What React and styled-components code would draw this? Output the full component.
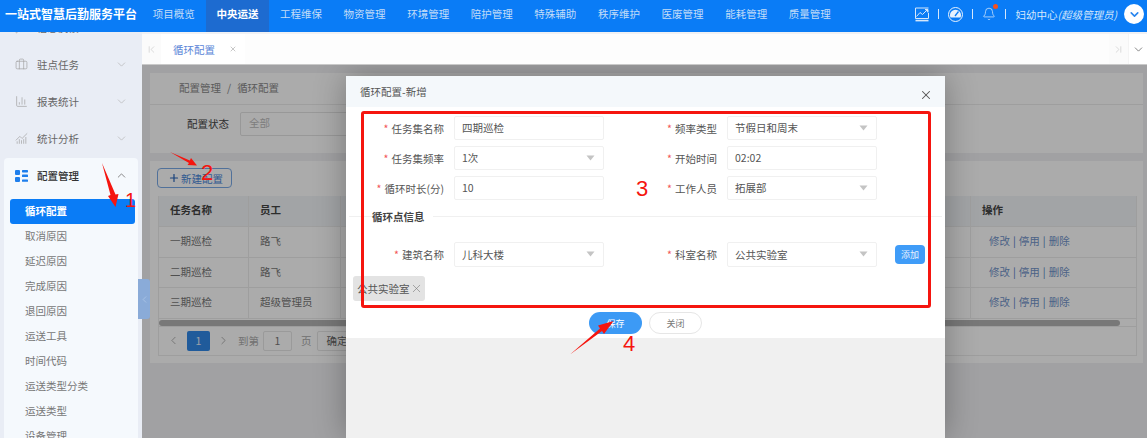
import React from 'react'
import styled, { createGlobalStyle } from 'styled-components'
import { Bell, Briefcase, ChartColumn, ChartNoAxesCombined, ChevronDown, ChevronFirst, ChevronLast, ChevronLeft, ChevronRight, ChevronUp, MessageSquare, Plus, X } from 'lucide-react'

const GlobalStyle = createGlobalStyle`
  * { box-sizing: border-box; }
  html, body { margin: 0; padding: 0; overflow: hidden; }
  body { font-family: "Noto Sans CJK SC", "Liberation Sans", sans-serif; font-size: 10.5px; color: #666; }
`

const NAV = ['项目概览', '中央运送', '工程维保', '物资管理', '环境管理', '陪护管理', '特殊辅助', '秩序维护', '医废管理', '能耗管理', '质量管理']
const SUBMENU = ['取消原因', '延迟原因', '完成原因', '退回原因', '运送工具', '时间代码', '运送类型分类', '运送类型', '设备管理']
const ROWS = [['一期巡检', '路飞'], ['二期巡检', '路飞'], ['三期巡检', '超级管理员']]

function GridIcon() {
  return (
    <svg width="13" height="12" viewBox="0 0 13 12" fill="#1f7fec">
      <rect x="0" y="0" width="5" height="5" rx="1" />
      <rect x="0" y="7" width="5" height="5" rx="1" />
      <rect x="7" y="0" width="6" height="2.4" rx="0.6" />
      <rect x="7" y="4.6" width="6" height="2.4" rx="0.6" />
      <rect x="7" y="9.4" width="6" height="2.4" rx="0.6" />
    </svg>
  )
}

function Caret() {
  return (
    <svg width="9" height="6" viewBox="0 0 9 6" fill="#c4c4c4">
      <path d="M0.5 0.5h8L4.5 5.5z" />
    </svg>
  )
}

function TrendBoard() {
  return (
    <svg width="14" height="15" viewBox="0 0 14 15" fill="none" stroke="#d5e7fb" strokeWidth="1">
      <path d="M13.5 1H.5v10.5h13V6" />
      <path d="M1.5 9.5 5 5.5l2.5 2L12 3" />
      <path d="M10 2.5h3V5.5" fill="#d5e7fb" />
      <rect x="0.5" y="12.8" width="13" height="1.6" fill="#d5e7fb" stroke="none" />
    </svg>
  )
}

function DialIcon() {
  return (
    <svg width="15" height="15" viewBox="0 0 15 15" fill="none" stroke="#e8f2fd">
      <circle cx="7.5" cy="7.5" r="7" strokeWidth="1" />
      <path d="M2.5 10.5a5.5 5.5 0 1 1 10 0z" fill="#e8f2fd" stroke="none" />
      <path d="M7 9 10.5 4.5" stroke="#0a7cf6" strokeWidth="1.3" />
    </svg>
  )
}

export default function App() {
  return (
    <Page>
      <GlobalStyle />
      <TopBar>
        <Logo>一站式智慧后勤服务平台</Logo>
        <Nav>
          {NAV.map((n) => (
            <NavItem key={n} $active={n === '中央运送'}>{n}</NavItem>
          ))}
        </Nav>
        <TopRight>
          <TrendBoard />
          <Sep />
          <DialIcon />
          <Sep />
          <BellWrap>
            <Bell size={14} strokeWidth={1.3} />
            <Dot />
          </BellWrap>
          <Sep />
          <UserName>妇幼中心<em>(超级管理员)</em></UserName>
          <Avatar><ChevronDown size={13} strokeWidth={3} color="#2a86ee" /></Avatar>
        </TopRight>
      </TopBar>

      <Body>
        <Sidebar>
          <MenuItem><MessageSquare size={13} strokeWidth={1.3} /><span>信息反馈</span><ChevronDown size={13} strokeWidth={1.2} /></MenuItem>
          <MenuItem><Briefcase size={13} strokeWidth={1.3} /><span>驻点任务</span><ChevronDown size={13} strokeWidth={1.2} /></MenuItem>
          <MenuItem><ChartColumn size={13} strokeWidth={1.3} /><span>报表统计</span><ChevronDown size={13} strokeWidth={1.2} /></MenuItem>
          <MenuItem><ChartNoAxesCombined size={13} strokeWidth={1.3} /><span>统计分析</span><ChevronDown size={13} strokeWidth={1.2} /></MenuItem>
          <MenuCard>
            <MenuHead><GridIcon /><span>配置管理</span><ChevronUp size={13} strokeWidth={1.6} /></MenuHead>
            <ActiveSub>循环配置</ActiveSub>
            {SUBMENU.map((s) => <SubItem key={s}>{s}</SubItem>)}
          </MenuCard>
        </Sidebar>

        <Main>
          <TabBar>
            <TabArrow><ChevronFirst size={11} strokeWidth={1.3} /></TabArrow>
            <Tab>循环配置<X size={8} strokeWidth={1.4} color="#888" /></Tab>
            <TabFill />
            <TabArrow><ChevronLast size={11} strokeWidth={1.3} /></TabArrow>
            <TabArrow $dark><ChevronDown size={13} strokeWidth={1.3} /></TabArrow>
          </TabBar>

          <Content>
            <Card>
              <Crumb>配置管理<CrumbSep>/</CrumbSep>循环配置</Crumb>
              <Filter>
                <FilterLabel>配置状态</FilterLabel>
                <FilterBox>全部</FilterBox>
              </Filter>
            </Card>

            <ListCard>
              <NewButton><Plus size={12} strokeWidth={2.4} />新建配置</NewButton>
              <Table>
                <HeadRow>
                  <Cell>任务名称</Cell><Cell>员工</Cell><Cell />
                  <Cell>操作</Cell>
                </HeadRow>
                {ROWS.map(([a, b]) => (
                  <Row key={a}>
                    <Cell>{a}</Cell><Cell>{b}</Cell><Cell />
                    <OpCell>
                      <a>修改</a><i>|</i><a>停用</a><i>|</i><a>删除</a>
                    </OpCell>
                  </Row>
                ))}
                <ScrollTrack><ScrollThumb /></ScrollTrack>
                <Pager>
                  <ChevronLeft size={13} strokeWidth={1.2} color="#888" />
                  <PageNo>1</PageNo>
                  <ChevronRight size={13} strokeWidth={1.2} color="#888" />
                  <PagerText>到第</PagerText>
                  <PageInput>1</PageInput>
                  <PagerText>页</PagerText>
                  <PageOk>确定</PageOk>
                </Pager>
              </Table>
            </ListCard>

            <Overlay>
              <Modal>
                <ModalHead>循环配置-新增<X size={14} strokeWidth={1.8} color="#555" /></ModalHead>
                <ModalBody>
                  <FormGrid>
                    <Label $req>任务集名称</Label>
                    <Control>四期巡检</Control>
                    <Label $req>频率类型</Label>
                    <Control>节假日和周末<Caret /></Control>

                    <Label $req>任务集频率</Label>
                    <Control>1次<Caret /></Control>
                    <Label $req>开始时间</Label>
                    <Control>02:02</Control>

                    <Label $req>循环时长(分)</Label>
                    <Control>10</Control>
                    <Label $req>工作人员</Label>
                    <Control>拓展部<Caret /></Control>
                  </FormGrid>

                  <Section><SectionTitle>循环点信息</SectionTitle></Section>

                  <PointGrid>
                    <Label $req>建筑名称</Label>
                    <Control>儿科大楼<Caret /></Control>
                    <Label $req>科室名称</Label>
                    <Control>公共实验室<Caret /></Control>
                    <AddButton>添加</AddButton>
                  </PointGrid>

                  <Tag>公共实验室<X size={13} strokeWidth={1.1} color="#777" /></Tag>

                  <Footer>
                    <SaveButton>保存</SaveButton>
                    <CloseButton>关闭</CloseButton>
                  </Footer>
                </ModalBody>
                <ModalRest />
              </Modal>
            </Overlay>
          </Content>
        </Main>
      </Body>

      <CollapseHandle><ChevronLeft size={11} strokeWidth={1.3} color="#b9cfea" /></CollapseHandle>

      <RedFrame />
      <Arrows width="1147" height="438" viewBox="0 0 1147 438">
        <path d="M102 163 L110.5 195 L108 196 L115.5 207 L118.5 194 L115.5 194.5 Z" />
        <path d="M170 152 L189 163 L187.5 165 L197 165.5 L191 158 L189.8 160.5 Z" />
        <path d="M570 354.5 L602 331 L604 334 L613.5 321 L598 325.5 L600 328.5 Z" />
      </Arrows>
      <Mark $x={125} $y={188} $size={20}>1</Mark>
      <Mark $x={201} $y={160} $size={22}>2</Mark>
      <Mark $x={636} $y={176} $size={22}>3</Mark>
      <Mark $x={623} $y={331} $size={22}>4</Mark>
    </Page>
  )
}

const Page = styled.div`
  position: relative;
  width: 1147px;
  height: 438px;
  overflow: hidden;
  background: #e9edf5;
`

const TopBar = styled.header`
  position: relative;
  z-index: 1;
  display: flex;
  align-items: stretch;
  height: 32px;
  background: #0a7cf6;
  color: #fff;
`

const Logo = styled.div`
  width: 142px;
  padding-left: 5px;
  font-size: 12px;
  font-weight: 700;
  line-height: 28px;
  white-space: nowrap;
`

const Nav = styled.nav`
  display: flex;
`

const NavItem = styled.div`
  width: 63.6px;
  text-align: center;
  line-height: 28px;
  color: ${(p) => (p.$active ? '#fff' : '#c3dcf8')};
  font-weight: ${(p) => (p.$active ? 700 : 400)};
  background: ${(p) => (p.$active ? '#1d6bd0' : 'transparent')};
`

const TopRight = styled.div`
  display: flex;
  align-items: center;
  margin-left: auto;
  padding: 0 3px 4px 0;
  color: #d5e7fb;
`

const Sep = styled.span`
  width: 1px;
  height: 10px;
  margin: 0 9px;
  background: #d5e7fb;
`

const BellWrap = styled.span`
  position: relative;
  display: flex;
`

const Dot = styled.span`
  position: absolute;
  top: -3px;
  right: -2px;
  width: 5px;
  height: 5px;
  border-radius: 50%;
  background: #f4511e;
`

const UserName = styled.span`
  white-space: nowrap;
  color: #d5e7fb;
  em { font-style: italic; }
`

const Avatar = styled.span`
  display: flex;
  align-items: center;
  justify-content: center;
  width: 20px;
  height: 20px;
  margin-left: 7px;
  border-radius: 50%;
  background: #fff;
`

const Body = styled.div`
  display: flex;
  height: 406px;
`

const Sidebar = styled.aside`
  flex: 0 0 142px;
  overflow: hidden;
  background: #e9edf5;
`

const MenuItem = styled.div`
  display: flex;
  align-items: center;
  height: 37px;
  padding: 0 14px 1px 15px;
  color: #a2a2a2;
  span { flex: 1; margin-left: 9px; color: #666; }
  svg:last-child { color: #b0b0b0; }
  &:first-child { margin-top: -22.5px; }
`

const MenuCard = styled.div`
  margin: 0 4px;
  height: 300px;
  border-radius: 4px 4px 0 0;
  background: #f5f9fd;
`

const MenuHead = styled.div`
  display: flex;
  align-items: center;
  height: 36px;
  padding: 0 10px 0 11px;
  color: #777;
  span { flex: 1; margin-left: 9px; color: #333; font-weight: 500; }
`

const ActiveSub = styled.div`
  height: 25px;
  margin: 5px 3px 0 6px;
  padding-left: 15px;
  line-height: 23px;
  border-radius: 3px;
  background: #0a7cf6;
  color: #fff;
  font-weight: 700;
`

const SubItem = styled.div`
  height: 25px;
  padding-left: 21px;
  line-height: 23px;
  color: #777;
`

const Main = styled.main`
  flex: 1;
  display: flex;
  flex-direction: column;
  min-width: 0;
  background: #f0f1f4;
`

const TabBar = styled.div`
  display: flex;
  height: 31px;
  margin-top: 2px;
  background: #fdfdfd;
  border-bottom: 1px solid #c9c9c9;
`

const TabArrow = styled.div`
  display: flex;
  align-items: center;
  justify-content: center;
  width: 19px;
  color: ${(p) => (p.$dark ? '#555' : '#c4c4c4')};
  border-left: ${(p) => (p.$dark ? '1px solid #f4f4f4' : '0')};
  background: ${(p) => (p.$dark ? '#fff' : '#fbfbfb')};
`

const Tab = styled.div`
  display: flex;
  align-items: center;
  justify-content: space-between;
  width: 84px;
  padding: 0 8px 0 12px;
  background: #fff;
  color: #5b86d8;
`

const TabFill = styled.div`
  flex: 1;
`

const Content = styled.div`
  position: relative;
  flex: 1;
  padding: 8px 4px 0 8px;
  overflow: hidden;
`

const Card = styled.section`
  height: 80px;
  background: #fff;
`

const Crumb = styled.div`
  height: 32px;
  padding-left: 29px;
  line-height: 30px;
  border-bottom: 1px solid #ececec;
  color: #888;
`

const CrumbSep = styled.span`
  margin: 0 6px;
`

const Filter = styled.div`
  display: flex;
  align-items: center;
  padding: 7px 0 0 37px;
`

const FilterLabel = styled.span`
  width: 53px;
  padding-bottom: 2px;
  color: #444;
`

const FilterBox = styled.div`
  width: 240px;
  height: 24px;
  padding-left: 8px;
  line-height: 20px;
  border: 1px solid #e3e3e3;
  border-radius: 2px;
  color: #bbb;
`

const ListCard = styled.section`
  height: 202px;
  margin-top: 8px;
  padding: 7px 6px 0 7px;
  background: #fff;
`

const NewButton = styled.button`
  display: flex;
  align-items: center;
  gap: 1px;
  width: 75px;
  height: 20px;
  padding: 0 0 0 10px;
  font: inherit;
  color: #4a86d8;
  background: #fff;
  border: 1px solid #7aa9e6;
  border-radius: 4px;
  svg { color: #2462b8; }
`

const Table = styled.div`
  margin: 8px 0 0 1px;
  border: solid #ececec;
  border-width: 0 1px 1px;
`

const HeadRow = styled.div`
  display: grid;
  grid-template-columns: 90px 92px 1fr 165px;
  height: 30px;
  background: #f2f5f8;
  color: #444;
  font-weight: 700;
  line-height: 28px;
`

const Row = styled.div`
  display: grid;
  grid-template-columns: 90px 92px 1fr 165px;
  height: 30.5px;
  border-top: 1px solid #ececec;
  line-height: 28px;
  color: #777;
`

const Cell = styled.div`
  padding-left: 11px;
  border-right: 1px solid #ececec;
  &:last-child { border-right: 0; }
`

const OpCell = styled.div`
  padding-left: 18px;
  color: #6d8fc8;
  white-space: nowrap;
  a { color: #7092c9; }
  i { margin: 0 3px; font-style: normal; color: #4d79bd; }
`

const ScrollTrack = styled.div`
  height: 8px;
  padding: 1px 16px 1px 0;
  border-top: 1px solid #ececec;
  background: #fff;
`

const ScrollThumb = styled.div`
  height: 6px;
  border-radius: 3px;
  background: #b4b4b4;
`

const Pager = styled.div`
  display: flex;
  align-items: center;
  height: 29px;
  padding-left: 8px;
  border-top: 1px solid #ececec;
`

const PageNo = styled.span`
  width: 23px;
  height: 20px;
  margin: 0 7px;
  text-align: center;
  line-height: 19px;
  color: #e6eef8;
  background: #3088e8;
  border-radius: 2px;
`

const PagerText = styled.span`
  margin: 0 4px 0 8px;
  color: #aaa;
`

const PageInput = styled.span`
  width: 29px;
  height: 20px;
  text-align: center;
  line-height: 18px;
  border: 1px solid #e6e6e6;
  border-radius: 2px;
  color: #777;
  & + span { margin-left: 9px; margin-right: 5px; }
`

const PageOk = styled.span`
  width: 40px;
  height: 20px;
  padding-left: 9px;
  line-height: 18px;
  border: 1px solid #e6e6e6;
  border-radius: 2px;
  color: #666;
`

const Overlay = styled.div`
  position: absolute;
  inset: 0;
  display: flex;
  padding: 11px 0 0 204px;
  background: rgba(0, 0, 0, 0.33);
`

const Modal = styled.div`
  display: flex;
  flex-direction: column;
  width: 599px;
  background: #fff;
  box-shadow: 0 0 30px rgba(0, 0, 0, 0.3);
`

const ModalHead = styled.div`
  display: flex;
  align-items: center;
  justify-content: space-between;
  flex: 0 0 31px;
  padding: 0 12px 0 14px;
  background: #f4f8fb;
  color: #555;
  svg { margin-top: 7px; }
`

const ModalBody = styled.div`
  flex: 0 0 231px;
  padding-top: 9px;
  background: #fff;
`

const ModalRest = styled.div`
  flex: 1;
  background: #f0f0f0;
`

const FormGrid = styled.div`
  display: grid;
  grid-template-columns: 98px 150px 103px 150px;
  grid-auto-rows: 24px;
  column-gap: 10px;
  row-gap: 6px;
`

const PointGrid = styled.div`
  display: grid;
  grid-template-columns: 98px 150px 103px 150px 38px;
  grid-auto-rows: 25px;
  column-gap: 10px;
  margin-top: 25px;
`

const Label = styled.label`
  align-self: center;
  text-align: right;
  white-space: nowrap;
  color: #555;
  &::before {
    content: ${(p) => (p.$req ? '"*"' : '""')};
    margin-right: 3px;
    color: #f25555;
  }
`

const Control = styled.div`
  display: flex;
  align-items: center;
  justify-content: space-between;
  padding: 0 8px 1px 7px;
  border: 1px solid #f0f0f0;
  border-radius: 2px;
  background: #fff;
  color: #555;
  font-size: 10.5px;
`

const Section = styled.div`
  height: 0;
  margin: 16px 3px 0;
  border-top: 1px solid #f0f0f0;
`

const SectionTitle = styled.div`
  display: inline-block;
  margin: -8px 0 0 23px;
  padding-right: 8px;
  line-height: 15px;
  background: #fff;
  color: #444;
  font-weight: 700;
  vertical-align: top;
`

const AddButton = styled.button`
  align-self: center;
  height: 19px;
  margin-left: 8px;
  padding: 0;
  font: inherit;
  font-size: 9px;
  color: #e6f1fd;
  background: #3f9cf8;
  border: 0;
  border-radius: 4px;
`

const Tag = styled.div`
  display: flex;
  align-items: center;
  width: 72px;
  height: 25px;
  margin: 9px 0 0 7px;
  padding-left: 4px;
  border-radius: 3px;
  background: #e3e3e3;
  color: #555;
  white-space: nowrap;
  font-size: 10.5px;
`

const Footer = styled.div`
  display: flex;
  justify-content: center;
  gap: 7px;
  margin-top: 11px;
`

const SaveButton = styled.button`
  width: 53px;
  height: 22px;
  padding: 0;
  font: inherit;
  font-size: 9px;
  color: #fff;
  background: #3c9af5;
  border: 0;
  border-radius: 11px;
`

const CloseButton = styled(SaveButton)`
  color: #777;
  background: #fff;
  border: 1px solid #e6e6e6;
`

const CollapseHandle = styled.div`
  position: absolute;
  left: 138px;
  top: 279px;
  display: flex;
  align-items: center;
  justify-content: center;
  width: 12px;
  height: 40px;
  border-radius: 0 3px 3px 0;
  background: #8aabd8;
`

const RedFrame = styled.div`
  position: absolute;
  left: 361px;
  top: 111px;
  width: 570px;
  height: 197px;
  border: 3px solid #f5150f;
  border-radius: 3px;
  pointer-events: none;
`

const Arrows = styled.svg`
  position: absolute;
  left: 0;
  top: 0;
  fill: #f5150f;
  pointer-events: none;
`

const Mark = styled.span`
  position: absolute;
  left: ${(p) => p.$x}px;
  top: ${(p) => p.$y}px;
  font-family: "Liberation Sans", sans-serif;
  font-size: ${(p) => p.$size}px;
  line-height: 1.2;
  color: #f5150f;
`
